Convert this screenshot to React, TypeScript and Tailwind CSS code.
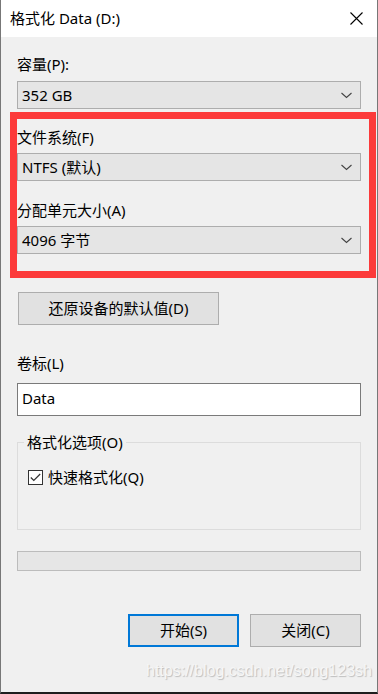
import React from "react";

const font = { fontFamily: '"Segoe UI", "Noto Sans", "Noto Sans CJK SC", sans-serif' };

function Chevron() {
  return (
    <svg width="11" height="7" viewBox="0 0 11 7" className="shrink-0">
      <path d="M0.5 1 L5.5 5.5 L10.5 1" fill="none" stroke="#444" strokeWidth="1.1" />
    </svg>
  );
}

function Combo({ value }: { value: string }) {
  return (
    <div className="h-[28px] w-[344px] flex items-center justify-between bg-[#e5e5e5] border border-[#adadad] pl-[4px] pr-[8px] text-[15px] text-black leading-none">
      <span>{value}</span>
      <Chevron />
    </div>
  );
}

export default function App() {
  return (
    <div
      style={font}
      className="relative w-[378px] h-[694px] flex flex-col bg-[#f0f0f0] border-l border-r border-[#777] border-b-2 border-b-[#1e1e1e] overflow-hidden text-black"
    >
      {/* title bar */}
      <div className="h-[37px] shrink-0 bg-white flex items-center justify-between pl-[9px] pr-[14px]">
        <span className="text-[15px] leading-none">格式化 Data (D:)</span>
        <svg width="13" height="13" viewBox="0 0 13 13">
          <path d="M0.5 0.5 L12.5 12.5 M12.5 0.5 L0.5 12.5" stroke="#000" strokeWidth="1.1" />
        </svg>
      </div>

      <div className="flex flex-col pl-[16px]">
        <div className="mt-[17px] h-[20px] leading-[20px] text-[15px]">容量(P):</div>
        <div className="mt-[7px]">
          <Combo value="352 GB" />
        </div>

        <div className="mt-[18px] h-[20px] leading-[20px] text-[15px]">文件系统(F)</div>
        <div className="mt-[6px]">
          <Combo value="NTFS (默认)" />
        </div>

        <div className="mt-[19px] h-[20px] leading-[20px] text-[15px]">分配单元大小(A)</div>
        <div className="mt-[6px]">
          <Combo value="4096 字节" />
        </div>

        <div className="mt-[38px] ml-[1px] h-[33px] w-[201px] flex items-center justify-center bg-[#e1e1e1] border border-[#adadad] text-[15px]">
          还原设备的默认值(D)
        </div>

        <div className="mt-[28px] h-[20px] leading-[20px] text-[15px]">卷标(L)</div>
        <div className="mt-[10px] h-[33px] w-[344px] flex items-center bg-white border border-[#7a7a7a] pl-[4px] pb-[3px] text-[15px]">
          Data
        </div>

        <div className="relative mt-[26px] h-[88px] w-[344px] border border-[#dcdcdc]">
          <div className="absolute left-[6px] top-[-11px] px-[3px] bg-[#f0f0f0] h-[20px] leading-[20px] text-[15px]">
            格式化选项(O)
          </div>
          <div className="mt-[24px] ml-[10px] flex items-center gap-[5px]">
            <div className="w-[15px] h-[15px] bg-white border border-[#333] flex items-center justify-center">
              <svg width="11" height="9" viewBox="0 0 11 9">
                <path d="M0.8 4.5 L3.8 7.5 L10.2 1" fill="none" stroke="#333" strokeWidth="1.2" />
              </svg>
            </div>
            <span className="text-[15px] leading-[20px]">快速格式化(Q)</span>
          </div>
        </div>

        <div className="mt-[21px] h-[20px] w-[344px] bg-[#e6e6e6] border border-[#bcbcbc]" />

        <div className="mt-[43px] w-[344px] flex justify-end gap-[11px]">
          <div className="h-[33px] w-[111px] flex items-center justify-center bg-[#e1e1e1] border-2 border-[#0078d7] text-[15px]">
            开始(S)
          </div>
          <div className="h-[33px] w-[111px] flex items-center justify-center bg-[#e1e1e1] border border-[#adadad] text-[15px]">
            关闭(C)
          </div>
        </div>
      </div>

      {/* red annotation box */}
      <div className="absolute left-[9px] top-[112px] w-[366px] h-[166px] border-[7px] border-[#fc3a3a] pointer-events-none" />

      {/* watermark */}
      <div
        className="absolute left-[145px] top-[660px] whitespace-nowrap text-[16px] leading-[22px] text-[#f6f6f6] [text-shadow:1px_1px_1px_#bdbdbd]"
        style={{ fontFamily: '"Liberation Sans", Arial, sans-serif' }}
      >
        https://blog.csdn.net/song123sh
      </div>
    </div>
  );
}
